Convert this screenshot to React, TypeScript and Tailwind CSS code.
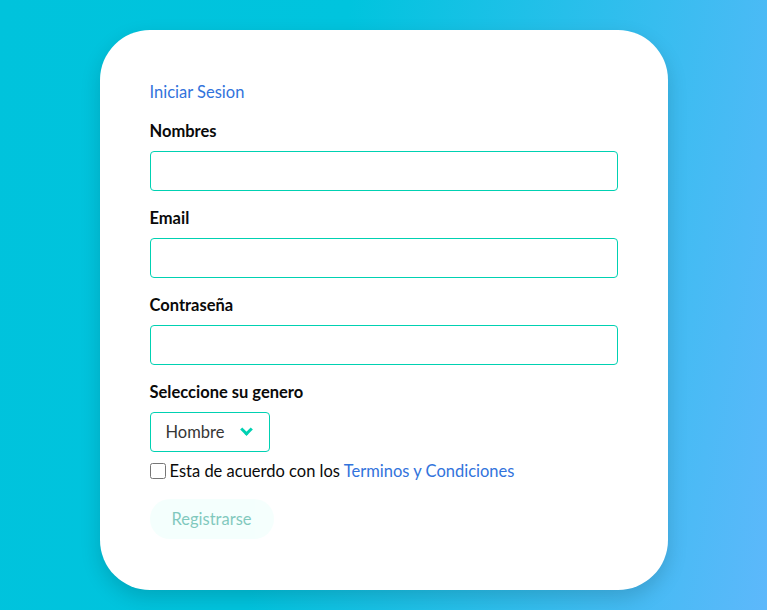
import React from 'react';

const Label = ({children}: {children: React.ReactNode}) => (
    <label className="block font-bold text-[16.5px] leading-6 text-[#0a0a0a] mb-2">{children}</label>
);

const Input = ({type = "text"}: {type?: string}) => (
    <input
        type={type}
        className="block w-full h-10 rounded border border-[#00d1b2] bg-white px-3 text-base text-[#363636] focus:outline-none"/>
);

export default function App() {
    return (
        <div
            className="min-h-[610px] w-full flex justify-center pt-[30px] pb-5 bg-[linear-gradient(100deg,#00c3dc_0%,#00c4de_40%,#5db8fb_100%)]"
            style={{fontFamily: 'Lato, "Noto Sans", sans-serif'}}>
            <div className="w-[568px] h-[560px] bg-white rounded-[50px] p-[50px] shadow-[0_8px_20px_rgba(0,0,0,0.15)]">
                <a href="#" className="block text-[16.5px] leading-6 text-[#3273dc]">Iniciar Sesion</a>

                <div className="mt-[15px]">
                    <Label>Nombres</Label>
                    <Input/>
                </div>
                <div className="mt-[15px]">
                    <Label>Email</Label>
                    <Input type="email"/>
                </div>
                <div className="mt-[15px]">
                    <Label>Contraseña</Label>
                    <Input type="password"/>
                </div>
                <div className="mt-[15px]">
                    <Label>Seleccione su genero</Label>
                    <div className="relative w-[120px] h-10">
                        <select
                            className="appearance-none w-full h-10 rounded border border-[#00d1b2] bg-white pl-[15px] pr-10 text-[16.5px] text-[#363636] focus:outline-none">
                            <option>Hombre</option>
                            <option>Mujer</option>
                        </select>
                        <span
                            className="pointer-events-none absolute right-[19px] top-[13px] w-[9px] h-[9px] border-l-[3px] border-b-[3px] border-[#00d1b2] -rotate-45"/>
                    </div>
                </div>
                <div className="mt-[7px] flex items-center h-6 text-[16.5px] text-[#0a0a0a]">
                    <input type="checkbox" className="w-4 h-4 mr-1 rounded-sm"/>
                    <span>Esta de acuerdo con los <a href="#" className="text-[#3273dc]">Terminos y Condiciones</a></span>
                </div>
                <button disabled
                        className="mt-[16px] h-10 w-[124px] rounded-full bg-[#ebfffc] text-[#00947e] opacity-50 text-[16.5px]">
                    Registrarse
                </button>
            </div>
        </div>
    );
}
